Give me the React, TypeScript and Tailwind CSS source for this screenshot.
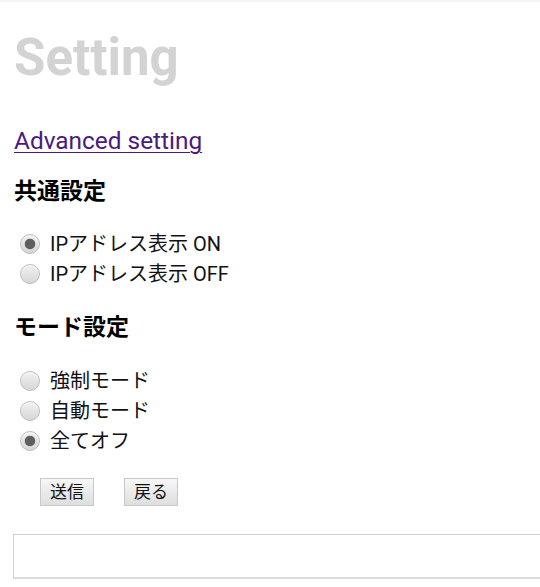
import React from "react";

const jp = "font-['Roboto','Noto_Sans_CJK_JP',sans-serif]";

function Radio({ label, checked }: { label: string; checked?: boolean }) {
  return (
    <label className="flex h-[30px] items-center">
      <span className="ml-[20px] flex h-[20px] w-[20px] items-center justify-center rounded-full border border-[#bdbdbd] bg-gradient-to-b from-[#f2f2f2] to-[#d6d6d6] shadow-[inset_0_1px_1px_rgba(255,255,255,0.8)]">
        {checked && <span className="h-[10px] w-[10px] rounded-full bg-[#5e5e5e] shadow-[0_0_1px_#333]" />}
      </span>
      <span className="ml-[10px] text-[20px] leading-none text-[#111]">{label}</span>
    </label>
  );
}

export default function App() {
  return (
    <div className={`min-h-[587px] w-[540px] overflow-hidden border-t-2 border-[#f4f4f4] bg-white ${jp}`}>
      <div className="pl-[14px]">
        <h1 className="mt-[31px] text-[51px] font-bold leading-[50px] text-[#d3d3d3]">Setting</h1>
        <a href="#" className="mt-[44px] inline-block text-[24.4px] leading-[28px] text-[#4a1a7e] underline decoration-1 underline-offset-[3px]">
          Advanced setting
        </a>
        <h2 className="mt-[21px] text-[23px] font-bold leading-[30px] text-black">共通設定</h2>
      </div>
      <div className="mt-[22px]">
        <Radio label="IPアドレス表示 ON" checked />
        <Radio label="IPアドレス表示 OFF" />
      </div>
      <h2 className="mt-[24px] pl-[14px] text-[23px] font-bold leading-[30px] text-black">モード設定</h2>
      <div className="mt-[23px]">
        <Radio label="強制モード" />
        <Radio label="自動モード" />
        <Radio label="全てオフ" checked />
      </div>
      <div className="mt-[22px] flex gap-[30px] pl-[40px]">
        <button className="h-[28px] w-[54px] border border-[#c8c8c8] bg-gradient-to-b from-[#f7f7f7] to-[#dedede] text-[17px] leading-none text-[#111]">
          送信
        </button>
        <button className="h-[28px] w-[54px] border border-[#c8c8c8] bg-gradient-to-b from-[#f7f7f7] to-[#dedede] text-[17px] leading-none text-[#111]">
          戻る
        </button>
      </div>
      <div className="ml-[13px] mt-[28px] h-[45px] w-[560px] border border-[#cfcfcf] border-b-2 border-b-[#dcdcdc] bg-white" />
    </div>
  );
}
